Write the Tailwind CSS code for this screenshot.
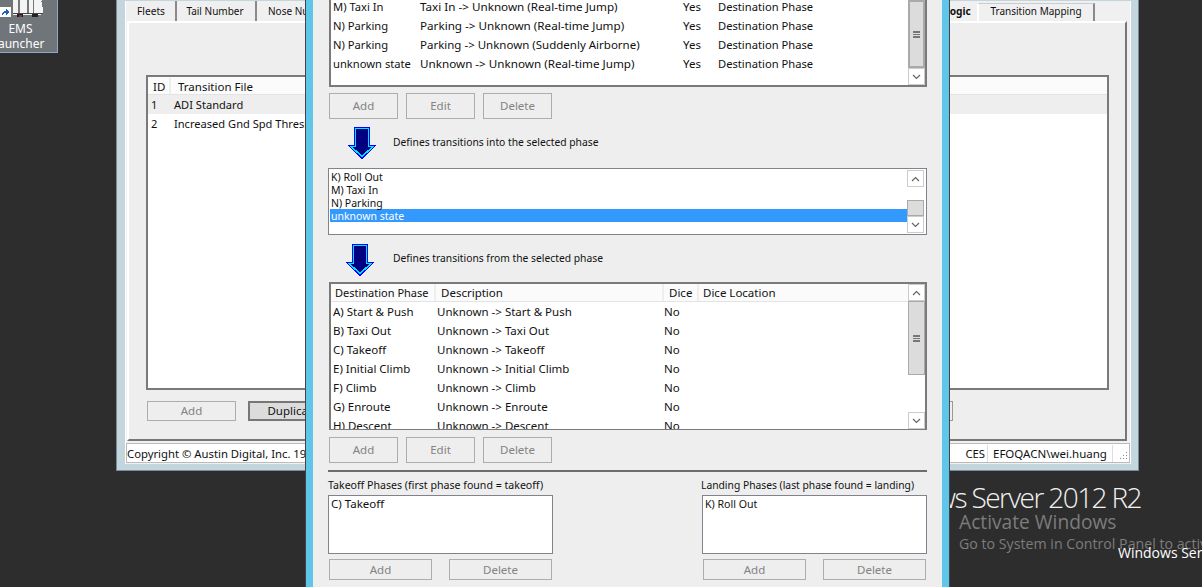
<!DOCTYPE html>
<html lang="en">
<head>
<meta charset="UTF-8" />
<title>EMS Flight Phase Transitions</title>
<script src="https://cdn.jsdelivr.net/npm/@tailwindcss/browser@4"></script>
</head>
<body class="relative w-[1202px] h-[587px] overflow-hidden bg-[#2d2d2d] font-['Noto_Sans',sans-serif] text-[11.5px] text-[#111]">

  <!-- desktop icon -->
  <div class="absolute left-0 top-0 w-[58px] h-[53px] bg-[#70757a] border-r border-b border-[#8fa8c8] overflow-hidden">
    <svg class="absolute left-0 top-0" width="46" height="18" viewBox="0 0 46 18" shape-rendering="crispEdges">
      <path d="M13 0h29v1h-1v1h1v5h1v6h-2v2H13z" fill="#f4f4f4"/>
      <path d="M18 0h2v14h-2zM27 0h2v14h-2zM33 0h1v14h-1z" fill="#777"/>
      <path d="M13 13h30v1H13z" fill="#444"/>
      <path d="M17 14h6v3h-6zM32 14h6v3h-6z" fill="#222"/>
      <path d="M19 15h3v2h-3z" fill="#8c2f2f"/>
      <rect x="0" y="7" width="11" height="10" fill="#fff"/>
      <path d="M2 16c0-4 1-5 4-5V9l4 3-4 3v-2c-2 0-3 1-4 3z" fill="#1d5fb4"/>
    </svg>
    <div class="absolute left-0 top-[21px] w-[41px] text-center text-white text-[12px] leading-[15px]">EMS</div>
    <div class="absolute left-[-12px] top-[36px] w-[60px] text-center text-white text-[12px] leading-[15px]">Launcher</div>
  </div>

  <!-- watermark -->
  <div class="absolute right-[61px] top-[479px] whitespace-nowrap text-[28px] leading-[36px] tracking-[-1.6px] font-light text-[#f2f2f2] font-['Open_Sans',sans-serif]">Windows Server 2012 R2</div>
  <div class="absolute left-[959px] top-[508px] whitespace-nowrap text-[19.2px] leading-[27px] text-[#7c7c7c] font-['Open_Sans',sans-serif]">Activate Windows</div>
  <div class="absolute left-[959px] top-[534px] whitespace-nowrap text-[14.2px] leading-[20px] text-[#7c7c7c] font-['Open_Sans',sans-serif]">Go to System in Control Panel to activate.</div>
  <div class="absolute left-[1118px] top-[543px] whitespace-nowrap text-[14px] leading-[20px] text-white font-['Open_Sans',sans-serif]">Windows Server</div>

  <!-- back window -->
  <div class="absolute left-[116px] top-[-30px] w-[1023px] h-[501px] bg-[#c3d6dd] border border-[#7b8a93] pl-[8px] pr-[7px] pb-[6px] pt-[30px] flex flex-col">
    <div class="flex-1 flex flex-col bg-[#f0f0f0] px-[1px] border-x border-white">
      <!-- tabs -->
      <div class="relative h-[20px] flex items-start shrink-0 text-[10px]">
        <div class="w-[50px] h-[20px] border-r-2 border-[#8a8a8a] text-center leading-[20px] bg-[#efefef] text-[10.2px]">Fleets</div>
        <div class="ml-[2px] w-[78px] h-[20px] pr-[4px] border-r-2 border-[#8a8a8a] text-center leading-[20px] bg-[#efefef]">Tail Number</div>
        <div class="ml-[2px] w-[70px] h-[20px] pl-[9px] leading-[20px] whitespace-nowrap">Nose Number</div>
        <div class="absolute left-[817px] top-0 w-[28px] h-[20px] font-bold leading-[20px] text-[10.2px]">Logic</div>
        <div class="absolute left-[850px] top-[2px] w-[118px] h-[18px] border-t border-x-2 border-r-[#8a8a8a] border-l-white border-t-[#ccc] text-center leading-[15px]">Transition Mapping</div>
      </div>
      <!-- tab panel -->
      <div class="flex-1 bg-[#eee] border-t-2 border-t-white border-r-2 border-r-[#777] border-b-2 border-b-[#777] border-l-2 border-l-white mr-[2px] pl-[17px] pr-[16px] pt-[52px] flex flex-col">
        <div class="h-[315px] bg-white border-2 border-[#7a7a7a] text-[11.1px]">
          <div class="h-[18px] pt-[1px] bg-[#fbfbfb] border-b border-[#e3e3e3] flex leading-[17px] text-[11.5px]">
            <div class="w-[23px] pl-[5px] border-r-2 border-[#eee]">ID</div>
            <div class="pl-[7px]">Transition File</div>
          </div>
          <div class="h-[19px] bg-[#eee] flex leading-[19px]"><div class="w-[26px] pl-[3px]">1</div><div>ADI Standard</div></div>
          <div class="h-[19px] flex leading-[19px]"><div class="w-[26px] pl-[3px]">2</div><div class="whitespace-nowrap">Increased Gnd Spd Threshold</div></div>
        </div>
        <div class="mt-[11px] flex pl-[1px]">
          <div class="w-[89px] h-[20px] border border-[#adadad] text-center text-[#838383] leading-[18px]">Add</div>
          <div class="ml-[12px] w-[90px] h-[20px] border-2 border-[#777] bg-[#dcdcdc] text-center leading-[16px]">Duplicate</div>
          <div class="ml-[525px] w-[90px] h-[20px] border border-[#999] bg-[#eee]"></div>
        </div>
      </div>
      <!-- status bar -->
      <div class="h-[20px] mt-[2px] mb-[1px] -mx-[1px] bg-white border border-[#bbb] flex items-center leading-[18px] relative text-[11.3px]">
        <div class="pt-[1px] whitespace-nowrap">Copyright © Austin Digital, Inc. 1998-2016</div>
        <div class="absolute left-[835px] top-[1px] w-[26px] text-right border-r border-[#ddd] pr-[2px] h-[17px]">CES</div>
        <div class="absolute left-[861px] top-[1px] pl-[5px] w-[125px] border-r border-[#ddd] h-[17px] text-[11.5px]">EFOQACN\wei.huang</div>
        <svg class="absolute right-[1px] bottom-[1px]" width="10" height="10" viewBox="0 0 10 10"><path d="M8 1h1v1H8zM5 4h1v1H5zM8 4h1v1H8zM2 7h1v1H2zM5 7h1v1H5zM8 7h1v1H8z" fill="#888"/></svg>
      </div>
    </div>
  </div>

  <!-- front dialog -->
  <div class="absolute left-[305px] top-[-40px] w-[645px] h-[640px] bg-[#5fc6ea] border-x border-[#444] px-[7px]">
    <div class="h-full bg-[#eee] pl-[16px] pr-[15px] pt-[40px] w-[629px] text-[11.5px]">
      <!-- top table -->
      <div class="relative flow-root h-[87px] w-[598px] bg-white border-x-2 border-b-2 border-[#7a7a7a] leading-[19px]">
        <div class="w-[579px] -mt-[3px]">
          <div class="flex h-[19px]"><div class="w-[89px] pl-[2px] text-[11.2px]">M) Taxi In</div><div class="w-[263px] whitespace-nowrap text-[11.66px]">Taxi In -&gt; Unknown (Real-time Jump)</div><div class="w-[35px]">Yes</div><div class="text-[11.2px]">Destination Phase</div></div>
          <div class="flex h-[19px]"><div class="w-[89px] pl-[2px] text-[11.2px]">N) Parking</div><div class="w-[263px] whitespace-nowrap text-[11.66px]">Parking -&gt; Unknown (Real-time Jump)</div><div class="w-[35px]">Yes</div><div class="text-[11.2px]">Destination Phase</div></div>
          <div class="flex h-[19px]"><div class="w-[89px] pl-[2px] text-[11.2px]">N) Parking</div><div class="w-[263px] whitespace-nowrap text-[11.5px]">Parking -&gt; Unknown (Suddenly Airborne)</div><div class="w-[35px]">Yes</div><div class="text-[11.2px]">Destination Phase</div></div>
          <div class="flex h-[19px]"><div class="w-[89px] pl-[2px] text-[11.2px]">unknown state</div><div class="w-[263px] whitespace-nowrap text-[11.66px]">Unknown -&gt; Unknown (Real-time Jump)</div><div class="w-[35px]">Yes</div><div class="text-[11.2px]">Destination Phase</div></div>
        </div>
        <div class="absolute right-0 top-0 bottom-0 w-[17px] flex flex-col">
          <div class="h-[68px] bg-[#dcdcdc] border-2 border-[#aaa] flex items-center justify-center">
            <div class="w-[7px] h-[7px] border-y-2 border-[#777] flex items-center"><div class="w-full h-[1px] bg-[#777]"></div></div>
          </div>
          <div class="h-[17px] bg-white border border-[#ccc] flex items-center justify-center">
            <svg width="9" height="6" viewBox="0 0 9 6"><path d="M1 1l3.500 3.500L8 1" fill="none" stroke="#666" stroke-width="1.200"/></svg>
          </div>
        </div>
      </div>
      <div class="mt-[6px] flex gap-[8px] text-[#838383] leading-[24px] text-center">
        <div class="w-[69px] h-[26px] border border-[#adadad]">Add</div>
        <div class="w-[69px] h-[26px] border border-[#adadad]">Edit</div>
        <div class="w-[69px] h-[26px] border border-[#adadad]">Delete</div>
      </div>

      <!-- first arrow row -->
      <div class="mt-[8px] h-[32px] flex items-center pl-[19px]">
        <svg width="28" height="32" viewBox="0 0 28 32" shape-rendering="crispEdges"><path d="M6.500 .5h15v18h6L14 31.500.500 18.500h6z" fill="#000080" stroke="#0000ff"/><path d="M7.500 1.500h13v18h4.500L14 29.500 3 19.500h4.500z" fill="none" stroke="#00e5ff" stroke-width="1.500"/></svg>
        <div class="ml-[17px] text-[10.3px]">Defines transitions into the selected phase</div>
      </div>

      <!-- phase list -->
      <div class="relative mt-[9px] -ml-[1px] h-[67px] w-[599px] bg-white border border-[#82828c] p-[1px] leading-[13px] text-[10.5px]">
        <div class="h-[13px] pt-[1px] pl-[1px]">K) Roll Out</div>
        <div class="h-[13px] pt-[1px] pl-[1px]">M) Taxi In</div>
        <div class="h-[13px] pt-[1px] pl-[1px]">N) Parking</div>
        <div class="h-[13px] pt-[1px] pl-[1px] w-[579px] bg-[#3399ff] text-white">unknown state</div>
        <div class="absolute right-[2px] top-[1px] bottom-[1px] w-[17px] flex flex-col">
          <div class="h-[17px] bg-white border border-[#ccc] flex items-center justify-center">
            <svg width="9" height="6" viewBox="0 0 9 6"><path d="M1 5l3.500-3.500L8 5" fill="none" stroke="#666" stroke-width="1.200"/></svg>
          </div>
          <div class="h-[13px]"></div>
          <div class="h-[16px] bg-[#dcdcdc] border border-[#aaa]"></div>
          <div class="h-[17px] bg-white border border-[#ccc] flex items-center justify-center">
            <svg width="9" height="6" viewBox="0 0 9 6"><path d="M1 1l3.500 3.500L8 1" fill="none" stroke="#666" stroke-width="1.200"/></svg>
          </div>
        </div>
      </div>

      <!-- second arrow row -->
      <div class="mt-[9px] h-[32px] flex items-center pl-[17px]">
        <svg width="28" height="32" viewBox="0 0 28 32" shape-rendering="crispEdges"><path d="M6.500 .5h15v18h6L14 31.500.500 18.500h6z" fill="#000080" stroke="#0000ff"/><path d="M7.500 1.500h13v18h4.500L14 29.500 3 19.500h4.500z" fill="none" stroke="#00e5ff" stroke-width="1.500"/></svg>
        <div class="ml-[19px] text-[10.3px] -mt-[3px]">Defines transitions from the selected phase</div>
      </div>

      <!-- destination table -->
      <div class="relative mt-[6px] h-[148px] w-[598px] bg-white border-2 border-[#7a7a7a] border-b-1 overflow-hidden leading-[19px]">
        <div class="h-[18px] bg-[#fbfbfb] border-b border-[#e3e3e3] flex leading-[18px]">
          <div class="w-[105px] pl-[4px] border-r-2 border-[#eee] text-[11px]">Destination Phase</div>
          <div class="w-[228px] pl-[5px] border-r-2 border-[#eee]">Description</div>
          <div class="w-[35px] pl-[5px] border-r-2 border-[#eee]">Dice</div>
          <div class="pl-[4px]">Dice Location</div>
        </div>
        <div class="flex h-[19px]"><div class="w-[106px] pl-[2px]">A) Start &amp; Push</div><div class="w-[227px]">Unknown -&gt; Start &amp; Push</div><div>No</div></div>
        <div class="flex h-[19px]"><div class="w-[106px] pl-[2px]">B) Taxi Out</div><div class="w-[227px]">Unknown -&gt; Taxi Out</div><div>No</div></div>
        <div class="flex h-[19px]"><div class="w-[106px] pl-[2px]">C) Takeoff</div><div class="w-[227px]">Unknown -&gt; Takeoff</div><div>No</div></div>
        <div class="flex h-[19px]"><div class="w-[106px] pl-[2px]">E) Initial Climb</div><div class="w-[227px]">Unknown -&gt; Initial Climb</div><div>No</div></div>
        <div class="flex h-[19px]"><div class="w-[106px] pl-[2px]">F) Climb</div><div class="w-[227px]">Unknown -&gt; Climb</div><div>No</div></div>
        <div class="flex h-[19px]"><div class="w-[106px] pl-[2px]">G) Enroute</div><div class="w-[227px]">Unknown -&gt; Enroute</div><div>No</div></div>
        <div class="flex h-[19px]"><div class="w-[106px] pl-[2px]">H) Descent</div><div class="w-[227px]">Unknown -&gt; Descent</div><div>No</div></div>
        <div class="absolute right-0 top-0 bottom-0 w-[17px] flex flex-col bg-white">
          <div class="h-[17px] bg-white border border-[#ccc] flex items-center justify-center">
            <svg width="9" height="6" viewBox="0 0 9 6"><path d="M1 5l3.500-3.500L8 5" fill="none" stroke="#666" stroke-width="1.200"/></svg>
          </div>
          <div class="h-[74px] bg-[#dcdcdc] border border-[#aaa] flex items-center justify-center">
            <div class="w-[7px] h-[7px] border-y-2 border-[#777] flex items-center"><div class="w-full h-[1px] bg-[#777]"></div></div>
          </div>
          <div class="flex-1"></div>
          <div class="h-[17px] bg-white border border-[#ccc] flex items-center justify-center">
            <svg width="9" height="6" viewBox="0 0 9 6"><path d="M1 1l3.500 3.500L8 1" fill="none" stroke="#666" stroke-width="1.200"/></svg>
          </div>
        </div>
      </div>
      <div class="mt-[7px] flex gap-[8px] text-[#838383] leading-[24px] text-center">
        <div class="w-[69px] h-[26px] border border-[#adadad]">Add</div>
        <div class="w-[69px] h-[26px] border border-[#adadad]">Edit</div>
        <div class="w-[69px] h-[26px] border border-[#adadad]">Delete</div>
      </div>

      <div class="mt-[7px] -ml-[1px] w-[599px] h-[2px] bg-[#6d6d6d]"></div>

      <!-- takeoff and landing phases -->
      <div class="mt-[5px] -ml-[1px] w-[599px] flex justify-between">
        <div class="w-[225px]">
          <div class="h-[18px] leading-[16px] whitespace-nowrap text-[10.6px]">Takeoff Phases (first phase found = takeoff)</div>
          <div class="h-[59px] bg-white border border-[#82828c] pl-[2px] leading-[16px]">C) Takeoff</div>
          <div class="mt-[5px] flex justify-between text-[#838383] text-center leading-[19px] px-[1px]">
            <div class="w-[103px] h-[21px] border border-[#adadad]">Add</div>
            <div class="w-[103px] h-[21px] border border-[#adadad]">Delete</div>
          </div>
        </div>
        <div class="w-[225px]">
          <div class="h-[18px] -ml-[1px] leading-[16px] whitespace-nowrap text-[10.3px]">Landing Phases (last phase found = landing)</div>
          <div class="h-[59px] bg-white border border-[#82828c] pl-[2px] leading-[16px] text-[10.6px]">K) Roll Out</div>
          <div class="mt-[5px] flex justify-between text-[#838383] text-center leading-[19px] px-[1px]">
            <div class="w-[103px] h-[21px] border border-[#adadad]">Add</div>
            <div class="w-[103px] h-[21px] border border-[#adadad]">Delete</div>
          </div>
        </div>
      </div>
    </div>
  </div>
</body>
</html>
